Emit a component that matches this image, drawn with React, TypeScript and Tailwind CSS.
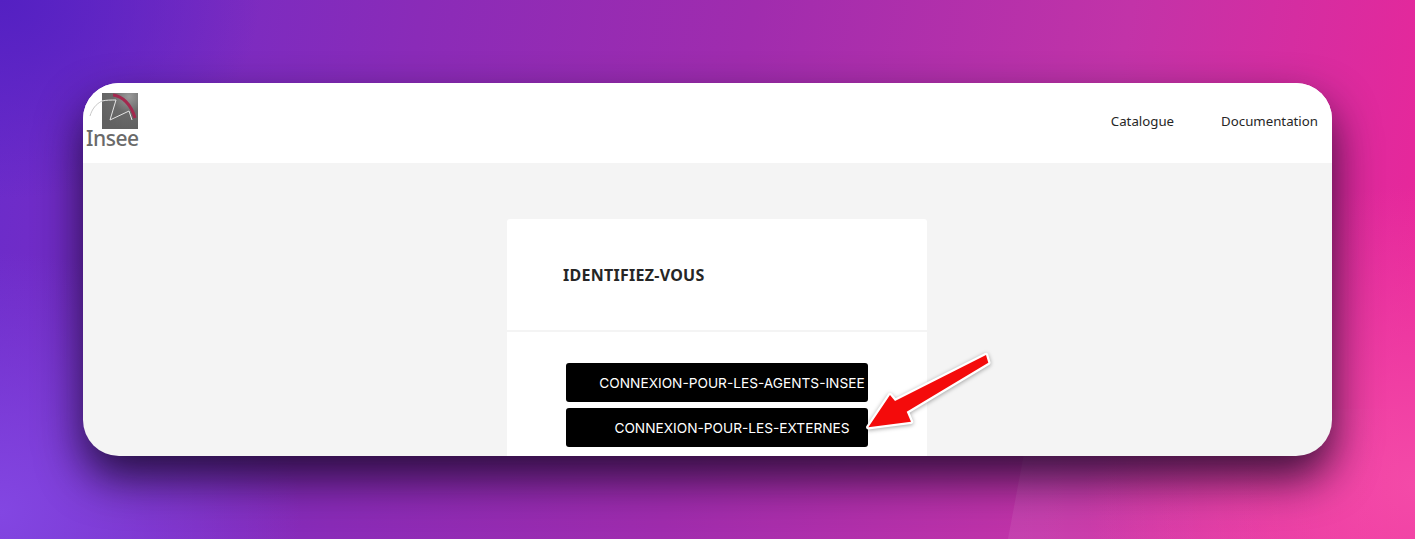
export default function App() {
  return (
    <div className="relative h-[539px] w-full overflow-hidden bg-[linear-gradient(100deg,#6a2ccb_0%,#8a2bb8_28%,#a02cae_50%,#c233a8_75%,#e8279a_97%)] px-[83px] pt-[83px] font-['Noto_Sans',sans-serif]">
      {/* light corners of the wallpaper */}
      <div className="absolute inset-0 bg-[radial-gradient(ellipse_300px_260px_at_0%_95%,#8346e2_0%,rgba(131,70,226,0)_100%)]" />
      <div className="absolute inset-0 bg-[radial-gradient(ellipse_330px_300px_at_100%_90%,#f44aa8_0%,rgba(244,74,168,0)_100%)]" />
      <div className="absolute inset-0 bg-[radial-gradient(ellipse_260px_200px_at_0%_0%,#5420c2_0%,rgba(84,32,194,0)_100%)]" />
      <div className="absolute bottom-0 left-[1008px] h-[130px] w-[407px] bg-[linear-gradient(90deg,rgba(255,255,255,0.07),rgba(255,255,255,0))] [clip-path:polygon(6%_0,100%_0,100%_100%,0_100%)]" />

      <div className="relative h-[373px] w-[1249px] overflow-hidden rounded-[36px] bg-[#f4f4f4] shadow-[0_22px_45px_rgba(15,5,30,0.8)]">
        <header className="flex h-20 items-start justify-between bg-white pr-[14px]">
          <Logo />
          <nav className="mt-[27px] flex gap-[47px] text-[13.25px] leading-[22px] text-[#262626]">
            <span>Catalogue</span>
            <span>Documentation</span>
          </nav>
        </header>

        <div className="ml-[424px] mt-14 h-[300px] w-[420px] rounded-[3px] bg-white">
          <div className="h-[113px] border-b-2 border-[#f4f4f4] pl-14 pt-[44px]">
            <h1 className="text-[16px] font-bold leading-6 tracking-[0.27px] text-[#262626]">
              IDENTIFIEZ-VOUS
            </h1>
          </div>
          <div className="flex flex-col gap-[6px] pl-[59px] pt-[31px]">
            <LoginButton label="CONNEXION-POUR-LES-AGENTS-INSEE" />
            <LoginButton label="CONNEXION-POUR-LES-EXTERNES" />
          </div>
        </div>
      </div>

      {/* annotation arrow */}
      <svg
        className="absolute left-[860px] top-[345px] drop-shadow-[0_1px_2px_rgba(0,0,0,0.35)]"
        width="140"
        height="95"
        viewBox="0 0 140 95"
        fill="none"
      >
        <polygon
          points="8.3,82.3 30,50 35,56 126,10 128.3,17.7 46.7,66.7 51,76.7"
          fill="#f40b0b"
          stroke="#ffffff"
          strokeWidth="4.5"
          strokeLinejoin="round"
          paintOrder="stroke"
        />
      </svg>
    </div>
  );
}

function LoginButton({ label }: { label: string }) {
  return (
    <button className="flex h-[39px] w-[302px] items-center justify-center whitespace-nowrap rounded-[3px] bg-black pl-8 pr-[2px] pt-[2px] font-['Inter',sans-serif] text-[13.7px] text-white">
      {label}
    </button>
  );
}

function Logo() {
  return (
    <div className="ml-[3px] mt-[10px] flex w-[54px] flex-col">
      <svg width="54" height="36" viewBox="0 0 54 36" fill="none">
        <defs>
          <radialGradient id="logoBg" cx="0.75" cy="0.1" r="0.9">
            <stop offset="0" stopColor="#9a9a9a" />
            <stop offset="0.5" stopColor="#6a6a6a" />
            <stop offset="1" stopColor="#616161" />
          </radialGradient>
        </defs>
        <rect x="16" y="0" width="36" height="36" fill="url(#logoBg)" />
        <path d="M27 2 C36 3 45 11 49 25" stroke="#a3284e" strokeWidth="3" />
        <path d="M4 23 C6 16 10 11 16 8" stroke="#c8c8c8" strokeWidth="1" />
        <path d="M16 8 C20 7 25 7 30 7 L24 27 L43 18 L46 27" stroke="#e4e4e4" strokeWidth="1" />
      </svg>
      <span className="-mt-[3px] text-[21px] font-medium leading-[24px] tracking-[-0.45px] text-[#6a6a6a]">Insee</span>
    </div>
  );
}
